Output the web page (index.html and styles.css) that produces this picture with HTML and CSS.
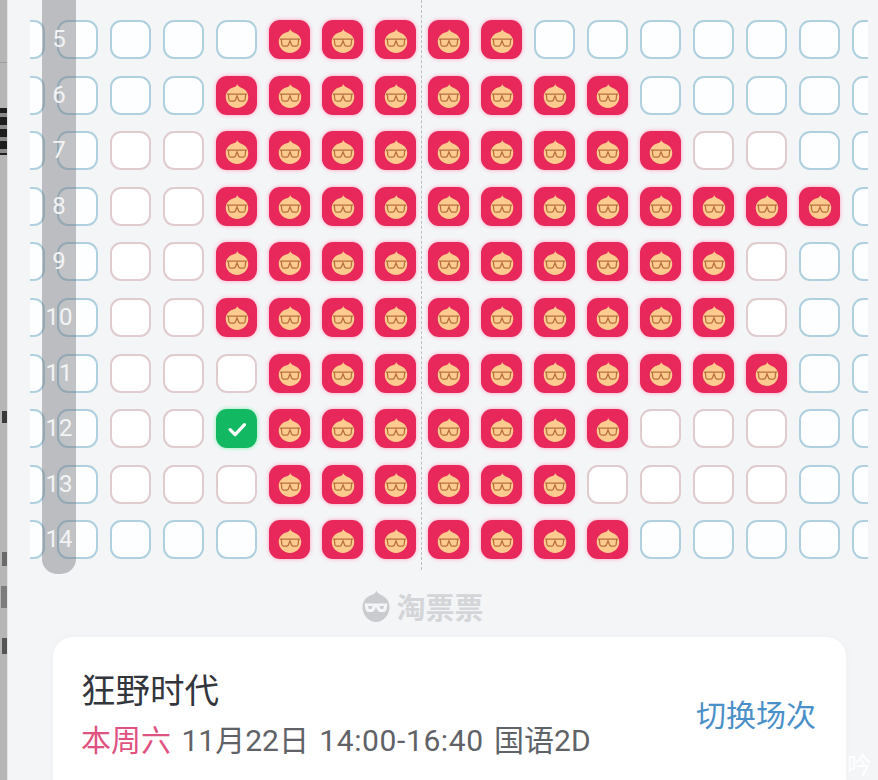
FILE: index.html
```html
<!DOCTYPE html>
<html lang="zh-CN">
<head>
    <meta charset="UTF-8">
    <meta name="viewport" content="width=device-width, initial-scale=1.0">
    <title>选座</title>
    <link rel="stylesheet" href="styles.css">
</head>
<body>

    <!-- shared icon for a sold seat -->
    <svg class="defs" width="0" height="0">
        <symbol id="face" viewBox="0 0 24 24">
            <path d="M12 3c.5 1.500 1.600 2.200 3 2.900 3.600 1.200 6 4 6 7.500 0 5-4 9-9 9s-9-4-9-9c0-3.900 2.800-6.800 6.500-7.700 1.500-.4 2.700-1.200 2.500-2.700z" fill="#fdcb8e"/>
            <path d="M4 11.200h16M5 11.200l.5 4.400c.1.800.6 1.200 1.300 1.200h2.700c.7 0 1.100-.3 1.300-1l1.200-3.200 1.200 3.200c.2.700.6 1 1.300 1h2.700c.7 0 1.200-.4 1.300-1.200l.5-4.400" fill="none" stroke="#b9703f" stroke-width="1"/>
        </symbol>
    </svg>

    <div class="edge">
        <span class="edge-mark mark-line"></span>
        <span class="edge-mark mark-a"></span>
        <span class="edge-mark mark-b"></span>
        <span class="edge-mark mark-c"></span>
        <span class="edge-mark mark-d"></span>
        <span class="edge-mark mark-e"></span>
    </div>

    <main class="page">
        <div class="hall">
            <div class="seats" id="seats"></div>
            <div class="center-line"></div>
            <div class="row-bar" id="rowBar"></div>
        </div>

        <div class="brand">
            <svg class="brand-icon" viewBox="0 0 32 32" width="32" height="32">
                <path d="M16 0c.8 2.700 2.800 3.600 5 5 5 2 8.500 6.300 8.500 11.800C29.500 25 23.500 32 16 32S2.500 25 2.500 16.800c0-6.300 4.500-11 10.500-12.400C14.800 3.600 16.200 2 16 0z" fill="#c9cbce"/>
                <path d="M4.500 13.500h23l-1 6c-.3 1.600-1.300 2.400-2.800 2.400h-3.400c-1.500 0-2.500-.7-3-2.100L16 17l-1.300 2.800c-.5 1.400-1.500 2.100-3 2.100H8.300c-1.500 0-2.500-.8-2.800-2.400z" fill="#f4f5f7"/>
                <path d="M8 16h4.500l-1 3H8.800zM19.500 16H24l-.8 3h-2.700z" fill="#c9cbce"/>
            </svg>
            <span class="brand-name">淘票票</span>
        </div>

        <section class="show-card">
            <div class="show-info">
                <h1 class="show-title">狂野时代</h1>
                <p class="show-time"><span class="show-day">本周六</span> 11月22日 <span class="show-range">14:00-16:40</span> 国语2D</p>
            </div>
            <a class="show-switch" href="#">切换场次</a>
        </section>
    </main>

    <span class="watermark">吟</span>

    <script src="script.js"></script>
</body>
</html>
```

FILE: styles.css
```css
/* page */
html, body {
    margin: 0;
    padding: 0;
    height: 780px;
    overflow: hidden;
    background-color: #f4f5f7;
    font-family: "Roboto", "Noto Sans CJK SC", sans-serif;
}

body {
    display: flex;
    position: relative;
}

.defs {
    position: absolute;
}

/* edge of the picture behind */
.edge {
    position: relative;
    flex: 0 0 7px;
    background-color: #b6b6b6;
    border-right: 1px solid #e4e4e4;
}

.edge-mark {
    position: absolute;
    left: 0;
    width: 7px;
}

.mark-line { top: 62px; height: 1px; background-color: #9c9c9c; }
.mark-a {
    top: 108px;
    height: 47px;
    background: repeating-linear-gradient(#1e1e1e 0 5px, #8a8a8a 5px 9px, #1e1e1e 9px 12px);
}
.mark-b { top: 411px; height: 12px; left: 2px; width: 5px; background-color: #3a3a3a; }
.mark-c { top: 552px; height: 14px; left: 2px; width: 5px; background-color: #6a6a6a; }
.mark-d { top: 586px; height: 22px; left: 1px; width: 6px; background-color: #7c7c7c; }
.mark-e { top: 638px; height: 16px; left: 2px; width: 5px; background-color: #555555; }

.page {
    flex: 1;
    min-width: 0;
    display: flex;
    flex-direction: column;
}

/* seats */
.hall {
    position: relative;
    height: 574px;
    margin-left: 22px;
    width: 838px;
}

.seats {
    height: 100%;
    overflow: hidden;
    padding-top: 20px;
    box-sizing: border-box;
}

.seat-row {
    display: flex;
    gap: 12px;
    margin-left: -26px;
    margin-bottom: 16.6px;
}

.seat {
    flex: 0 0 41px;
    height: 39px;
    box-sizing: border-box;
    border-radius: 11px;
    display: flex;
    align-items: center;
    justify-content: center;
}

.seat.free {
    background-color: #fdfeff;
    border: 2px solid #b0d0e0;
}

.seat.vip {
    background-color: #ffffff;
    border: 2px solid #e0cbce;
}

.seat.sold {
    background-color: #e8285a;
    box-shadow: 0 0 4px #ff9fc0;
}

.seat.picked {
    background-color: #12b862;
    box-shadow: 0 0 4px #80f0b0;
}

.seat svg {
    width: 30px;
    height: 30px;
}

.center-line {
    position: absolute;
    top: 0;
    left: 391px;
    height: 570px;
    border-left: 1px dashed #bcbec1;
}

.row-bar {
    position: absolute;
    top: 0;
    left: 12px;
    width: 34px;
    height: 574px;
    padding-top: 20px;
    box-sizing: border-box;
    background-color: rgba(110, 112, 116, 0.42);
    border-radius: 0 0 15px 15px;
}

.row-num {
    height: 55.6px;
    line-height: 39px;
    text-align: center;
    color: #f2f3f5;
    font-size: 24px;
}

/* brand */
.brand {
    display: flex;
    align-items: center;
    justify-content: center;
    gap: 4px;
    width: 828px;
    height: 63px;
}

.brand-name {
    font-size: 29px;
    font-weight: 700;
    color: #d3d5d8;
}

/* card */
.show-card {
    flex: 1;
    display: flex;
    justify-content: space-between;
    margin-left: 45px;
    width: 793px;
    padding: 34px 30px 0 28px;
    box-sizing: border-box;
    background-color: #ffffff;
    border-radius: 20px 20px 0 0;
    box-shadow: 0 0 6px #eceef0;
}

.show-title {
    margin: 0;
    font-size: 34.500px;
    line-height: 40px;
    font-weight: 400;
    color: #33363c;
}

.show-time {
    margin: 10px 0 0;
    font-size: 30px;
    line-height: 40px;
    word-spacing: 3px;
    color: #5f6266;
    white-space: nowrap;
}

.show-day {
    color: #e0527f;
}

.show-range {
    letter-spacing: 0.6px;
}

.show-switch {
    margin-top: 25px;
    font-size: 30px;
    line-height: 40px;
    color: #4a90c8;
    text-decoration: none;
}

.watermark {
    position: absolute;
    left: 847px;
    top: 746px;
    font-size: 24px;
    color: #ffffff;
}
```

FILE: script.js
```js
// one letter per seat: b free, p vip, r sold, g picked
const rows = [
    [5, "bbbbbrrrrrbbbbbbb"],
    [6, "bbbbrrrrrrrrbbbbb"],
    [7, "bbpprrrrrrrrrppbb"],
    [8, "bbpprrrrrrrrrrrrb"],
    [9, "bbpprrrrrrrrrrpbb"],
    [10, "bbpprrrrrrrrrrpbb"],
    [11, "bbppprrrrrrrrrrbb"],
    [12, "bbppgrrrrrrrpppbb"],
    [13, "bbppprrrrrrppppbb"],
    [14, "bbbbbrrrrrrrbbbbb"]
];

const classes = { b: "free", p: "vip", r: "sold", g: "picked" };
const face = '<svg><use href="#face"></use></svg>';
const check = '<svg viewBox="0 0 24 24"><path d="M6.500 12.500l4 4 7.500-8" fill="none" stroke="#ffffff" stroke-width="2.600" stroke-linecap="round" stroke-linejoin="round"/></svg>';

const seats = document.getElementById("seats");
const rowBar = document.getElementById("rowBar");

rows.forEach(([num, letters]) => {
    const row = document.createElement("div");
    row.className = "seat-row";
    for (const letter of letters) {
        const seat = document.createElement("div");
        seat.className = "seat " + classes[letter];
        if (letter === "r") seat.innerHTML = face;
        if (letter === "g") seat.innerHTML = check;
        row.appendChild(seat);
    }
    seats.appendChild(row);

    const label = document.createElement("div");
    label.className = "row-num";
    label.textContent = num;
    rowBar.appendChild(label);
});
```
